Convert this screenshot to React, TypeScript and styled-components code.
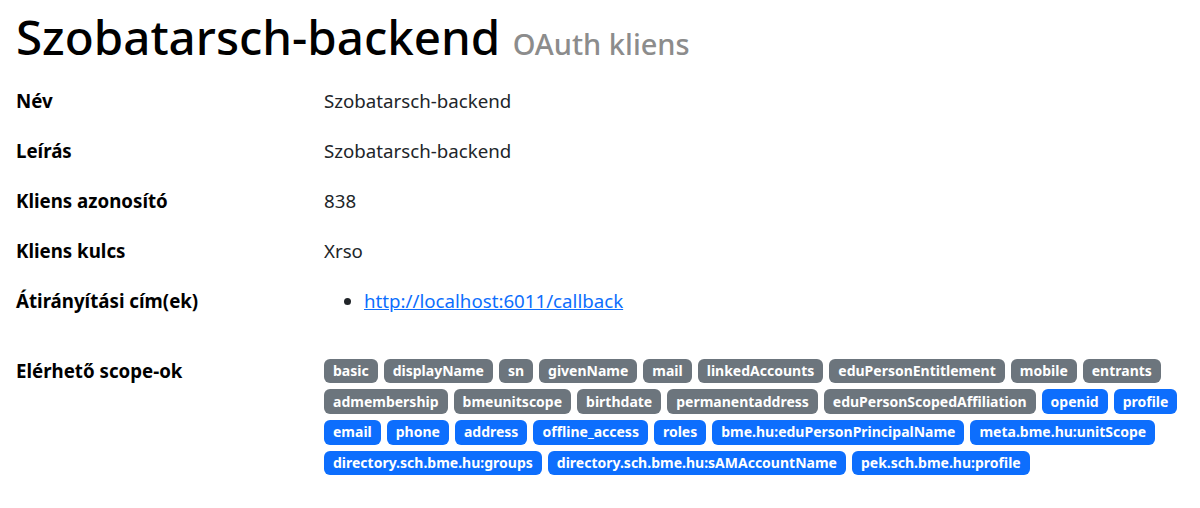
import React from "react";
import styled, { createGlobalStyle } from "styled-components";

const Global = createGlobalStyle`
  html, body { margin: 0; padding: 0; background: #fff; }
  body {
    font-family: "Noto Sans", "Open Sans", sans-serif;
    font-size: 18.7px;
    line-height: 1.5;
    color: #212529;
  }
`;

const Page = styled.main`
  padding: 0 16px;
`;

const Title = styled.h1`
  margin: 8px 0 22px;
  font-size: 47.5px;
  font-weight: 500;
  line-height: 1.2;
  color: #000;
`;

const Sub = styled.small`
  font-size: 29px;
  color: #8c8c8c;
  font-weight: 500;
`;

const List = styled.dl`
  margin: 0;
  display: grid;
  grid-template-columns: 308px 1fr;
`;

const Term = styled.dt<{ $gap?: number }>`
  font-weight: 700;
  color: #000;
  padding-bottom: ${(p) => p.$gap ?? 22}px;
`;

const Value = styled.dd`
  margin: 0;
`;

const Links = styled.ul`
  margin: 0;
  padding-left: 40px;
`;

const Link = styled.a`
  color: #0d6efd;
  text-decoration: underline;
`;

const Badges = styled.div`
  display: flex;
  flex-wrap: wrap;
  gap: 6px 6px;
  padding-top: 1.5px;
`;

const Badge = styled.span<{ $blue?: boolean }>`
  display: inline-block;
  font-size: 14px;
  font-weight: 700;
  line-height: 1;
  padding: 5.3px 9px;
  border-radius: 6px;
  color: #fff;
  background: ${(p) => (p.$blue ? "#0d6efd" : "#6c757d")};
`;

const gray = [
  "basic",
  "displayName",
  "sn",
  "givenName",
  "mail",
  "linkedAccounts",
  "eduPersonEntitlement",
  "mobile",
  "entrants",
  "admembership",
  "bmeunitscope",
  "birthdate",
  "permanentaddress",
  "eduPersonScopedAffiliation",
];
const blue = [
  "openid",
  "profile",
  "email",
  "phone",
  "address",
  "offline_access",
  "roles",
  "bme.hu:eduPersonPrincipalName",
  "meta.bme.hu:unitScope",
  "directory.sch.bme.hu:groups",
  "directory.sch.bme.hu:sAMAccountName",
  "pek.sch.bme.hu:profile",
];

export default function App() {
  return (
    <Page>
      <Global />
      <Title>
        Szobatarsch-backend <Sub>OAuth kliens</Sub>
      </Title>
      <List>
        <Term>Név</Term>
        <Value>Szobatarsch-backend</Value>
        <Term>Leírás</Term>
        <Value>Szobatarsch-backend</Value>
        <Term>Kliens azonosító</Term>
        <Value>838</Value>
        <Term>Kliens kulcs</Term>
        <Value>Xrso</Value>
        <Term $gap={42}>Átirányítási cím(ek)</Term>
        <Value>
          <Links>
            <li>
              <Link href="#">http://localhost:6011/callback</Link>
            </li>
          </Links>
        </Value>
        <Term>Elérhető scope-ok</Term>
        <Value>
          <Badges>
            {gray.map((s) => (
              <Badge key={s}>{s}</Badge>
            ))}
            {blue.map((s) => (
              <Badge key={s} $blue>
                {s}
              </Badge>
            ))}
          </Badges>
        </Value>
      </List>
    </Page>
  );
}
